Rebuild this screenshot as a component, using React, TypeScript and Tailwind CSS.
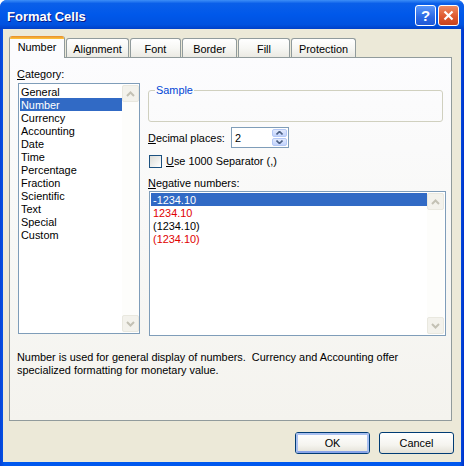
import type { ReactNode } from 'react';

const CATEGORIES = [
  'General',
  'Number',
  'Currency',
  'Accounting',
  'Date',
  'Time',
  'Percentage',
  'Fraction',
  'Scientific',
  'Text',
  'Special',
  'Custom',
];

const NEGATIVES = [
  { label: '-1234.10', red: false },
  { label: '1234.10', red: true },
  { label: '(1234.10)', red: false },
  { label: '(1234.10)', red: true },
];

const TABS = [
  { label: 'Number', w: 'w-[56px]' },
  { label: 'Alignment', w: 'w-[63px]' },
  { label: 'Font', w: 'w-[51px]' },
  { label: 'Border', w: 'w-[55px]' },
  { label: 'Fill', w: 'w-[52px]' },
  { label: 'Protection', w: 'w-[65px]' },
];

function Chevron({ up }: { up?: boolean }) {
  return (
    <svg width="9" height="6" viewBox="0 0 9 6">
      <path
        d={up ? 'M1 5 L4.5 1.5 L8 5' : 'M1 1 L4.5 4.5 L8 1'}
        fill="none"
        stroke="#c3c1b4"
        strokeWidth="2"
      />
    </svg>
  );
}

function ScrollBar() {
  return (
    <div className="flex w-[17px] flex-col justify-between bg-[#fdfdfb]">
      <div className="flex h-[17px] items-center justify-center rounded-[2px] border border-[#e9e8df] bg-[#f3f2ec]">
        <Chevron up />
      </div>
      <div className="flex h-[17px] items-center justify-center rounded-[2px] border border-[#e9e8df] bg-[#f3f2ec]">
        <Chevron />
      </div>
    </div>
  );
}

function Key({ children }: { children: ReactNode }) {
  return <span className="underline underline-offset-[1px]">{children}</span>;
}

function TitleBar() {
  return (
    <div className="flex h-[29px] items-center justify-between bg-[linear-gradient(180deg,#3d8ef7_0%,#0a5fe9_12%,#0058ea_50%,#0052e0_85%,#0040c8_100%)] pl-[7px] pr-[5px] pt-[2px]">
      <span className="pt-[1px] text-[13px] font-bold text-white [text-shadow:1px_1px_0_#0a1883]">
        Format Cells
      </span>
      <div className="flex gap-[2px]">
        <div className="flex h-[21px] w-[21px] items-center justify-center rounded-[3px] border border-white bg-[linear-gradient(180deg,#5a97fa_0%,#2a68e4_60%,#1f58d6_100%)] text-[15px] font-bold leading-none text-white">
          ?
        </div>
        <div className="flex h-[21px] w-[21px] items-center justify-center rounded-[3px] border border-white bg-[linear-gradient(180deg,#ee8a62_0%,#df5a30_55%,#c8431d_100%)]">
          <svg width="11" height="11" viewBox="0 0 11 11">
            <path d="M1.5 1.5 L9.5 9.5 M9.5 1.5 L1.5 9.5" stroke="white" strokeWidth="2.2" />
          </svg>
        </div>
      </div>
    </div>
  );
}

function Tabs() {
  return (
    <div className="flex h-[21px] items-end gap-[1px]">
      {TABS.map((tab, i) =>
        i === 0 ? (
          <div
            key={tab.label}
            className={`${tab.w} relative z-10 -mb-px flex h-[22px] justify-center overflow-hidden rounded-t-[3px] border-x border-[#919b9c] bg-[#fcfcfe] pt-[5px]`}
          >
            <div className="absolute inset-x-0 top-0 h-[3px] bg-[linear-gradient(180deg,#e68b2c_0%,#ffc73c_100%)]" />
            {tab.label}
          </div>
        ) : (
          <div
            key={tab.label}
            className={`${tab.w} flex h-[19px] justify-center rounded-t-[3px] border-x border-t border-[#919b9c] bg-[linear-gradient(180deg,#ffffff_0%,#f7f7f4_50%,#ebeae3_100%)] pt-[4px]`}
          >
            {tab.label}
          </div>
        ),
      )}
    </div>
  );
}

function XpButton({ label, isDefault }: { label: string; isDefault?: boolean }) {
  return (
    <div className="h-[22px] w-[75px] rounded-[3px] border border-[#003c74] bg-[linear-gradient(180deg,#ffffff_0%,#f5f4ef_60%,#e3e0d6_100%)]">
      <div
        className={`flex h-full items-center justify-center rounded-[2px] pt-[1px] ${
          isDefault ? 'border-[2px] border-[#a9c0f0] border-b-[#89a4e8]' : ''
        }`}
      >
        {label}
      </div>
    </div>
  );
}

export default function App() {
  return (
    <div className="flex h-[466px] w-[464px] flex-col overflow-hidden rounded-t-[7px] bg-[linear-gradient(90deg,#0843d5_0%,#0058ee_1%,#0058ee_99%,#0031c8_100%)] font-['Liberation_Sans',Arial,sans-serif] text-[10.9px] leading-[13px] text-black">
      <TitleBar />
      <div className="mx-[3px] mb-[4px] flex flex-1 flex-col bg-[#ece9d8] pl-[6px] pr-[7px] pt-[7px]">
        <Tabs />
        <div className="flex h-[364px] w-[443px] flex-col border border-[#919b9c] bg-[linear-gradient(180deg,#fcfcfe_0%,#f8f8f6_50%,#f4f3ee_100%)] pl-[7px] pt-[10px]">
          <div className="flex items-start">
            <div className="flex flex-col">
              <span>
                <Key>C</Key>ategory:
              </span>
              <div className="ml-[1px] mt-[2px] flex h-[251px] w-[122px] border border-[#7f9db9] bg-white p-[1px] pr-0">
                <div className="flex flex-1 flex-col">
                  {CATEGORIES.map(c => (
                    <div
                      key={c}
                      className={`h-[13px] pl-[1px] pt-[1px] leading-[12px] ${c === 'Number' ? 'bg-[#316ac5] text-white' : ''}`}
                    >
                      {c}
                    </div>
                  ))}
                </div>
                <ScrollBar />
              </div>
            </div>

            <div className="ml-[8px] mt-[16px] flex w-[297px] flex-col">
              <fieldset className="h-[38px] w-[295px] rounded-[3px] border border-[#d0d0bf] px-[6px]">
                <legend className="px-[1px] text-[#0046d5]">Sample</legend>
              </fieldset>

              <div className="mt-[5px] flex items-center">
                <span className="w-[83px] pt-[1px]">
                  <Key>D</Key>ecimal places:
                </span>
                <div className="flex h-[21px] w-[58px] items-stretch border border-[#7f9db9] bg-white">
                  <span className="flex-1 pl-[3px] pt-[4px]">2</span>
                  <div className="flex w-[16px] flex-col gap-[1px] p-[1px] pl-0">
                    <div className="flex flex-1 items-center justify-center rounded-[2px] border border-[#b4c8f6] bg-[linear-gradient(180deg,#e1e9fd_0%,#c2d3fc_100%)]">
                      <svg width="7" height="4" viewBox="0 0 7 4">
                        <path d="M0.5 3.5 L3.5 0.5 L6.5 3.5" fill="none" stroke="#4d6185" strokeWidth="1.6" />
                      </svg>
                    </div>
                    <div className="flex flex-1 items-center justify-center rounded-[2px] border border-[#b4c8f6] bg-[linear-gradient(180deg,#e1e9fd_0%,#c2d3fc_100%)]">
                      <svg width="7" height="4" viewBox="0 0 7 4">
                        <path d="M0.5 0.5 L3.5 3.5 L6.5 0.5" fill="none" stroke="#4d6185" strokeWidth="1.6" />
                      </svg>
                    </div>
                  </div>
                </div>
              </div>

              <div className="mt-[6px] flex items-center">
                <div className="ml-[1px] h-[13px] w-[13px] border border-[#1c5180] bg-[linear-gradient(135deg,#dcdcd7_0%,#ffffff_100%)]" />
                <span className="ml-[4px] pt-[1px]">
                  <Key>U</Key>se 1000 Separator (,)
                </span>
              </div>

              <span className="mt-[9px]">
                <Key>N</Key>egative numbers:
              </span>
              <div className="ml-[1px] mt-[1px] flex h-[145px] w-[297px] border border-[#7f9db9] bg-white p-[1px]">
                <div className="flex flex-1 flex-col">
                  {NEGATIVES.map((n, i) => (
                    <div
                      key={i}
                      className={`h-[13px] pl-[2px] pt-[1px] leading-[12px] ${
                        i === 0 ? 'bg-[#316ac5] text-white' : n.red ? 'text-[#e00000]' : ''
                      }`}
                    >
                      {n.label}
                    </div>
                  ))}
                </div>
                <ScrollBar />
              </div>
            </div>
          </div>

          <p className="mt-[15px]">
            Number is used for general display of numbers.&nbsp; Currency and Accounting offer
            <br />
            specialized formatting for monetary value.
          </p>
        </div>

        <div className="mt-[11px] flex justify-end gap-[9px]">
          <XpButton label="OK" isDefault />
          <XpButton label="Cancel" />
        </div>
      </div>
    </div>
  );
}
